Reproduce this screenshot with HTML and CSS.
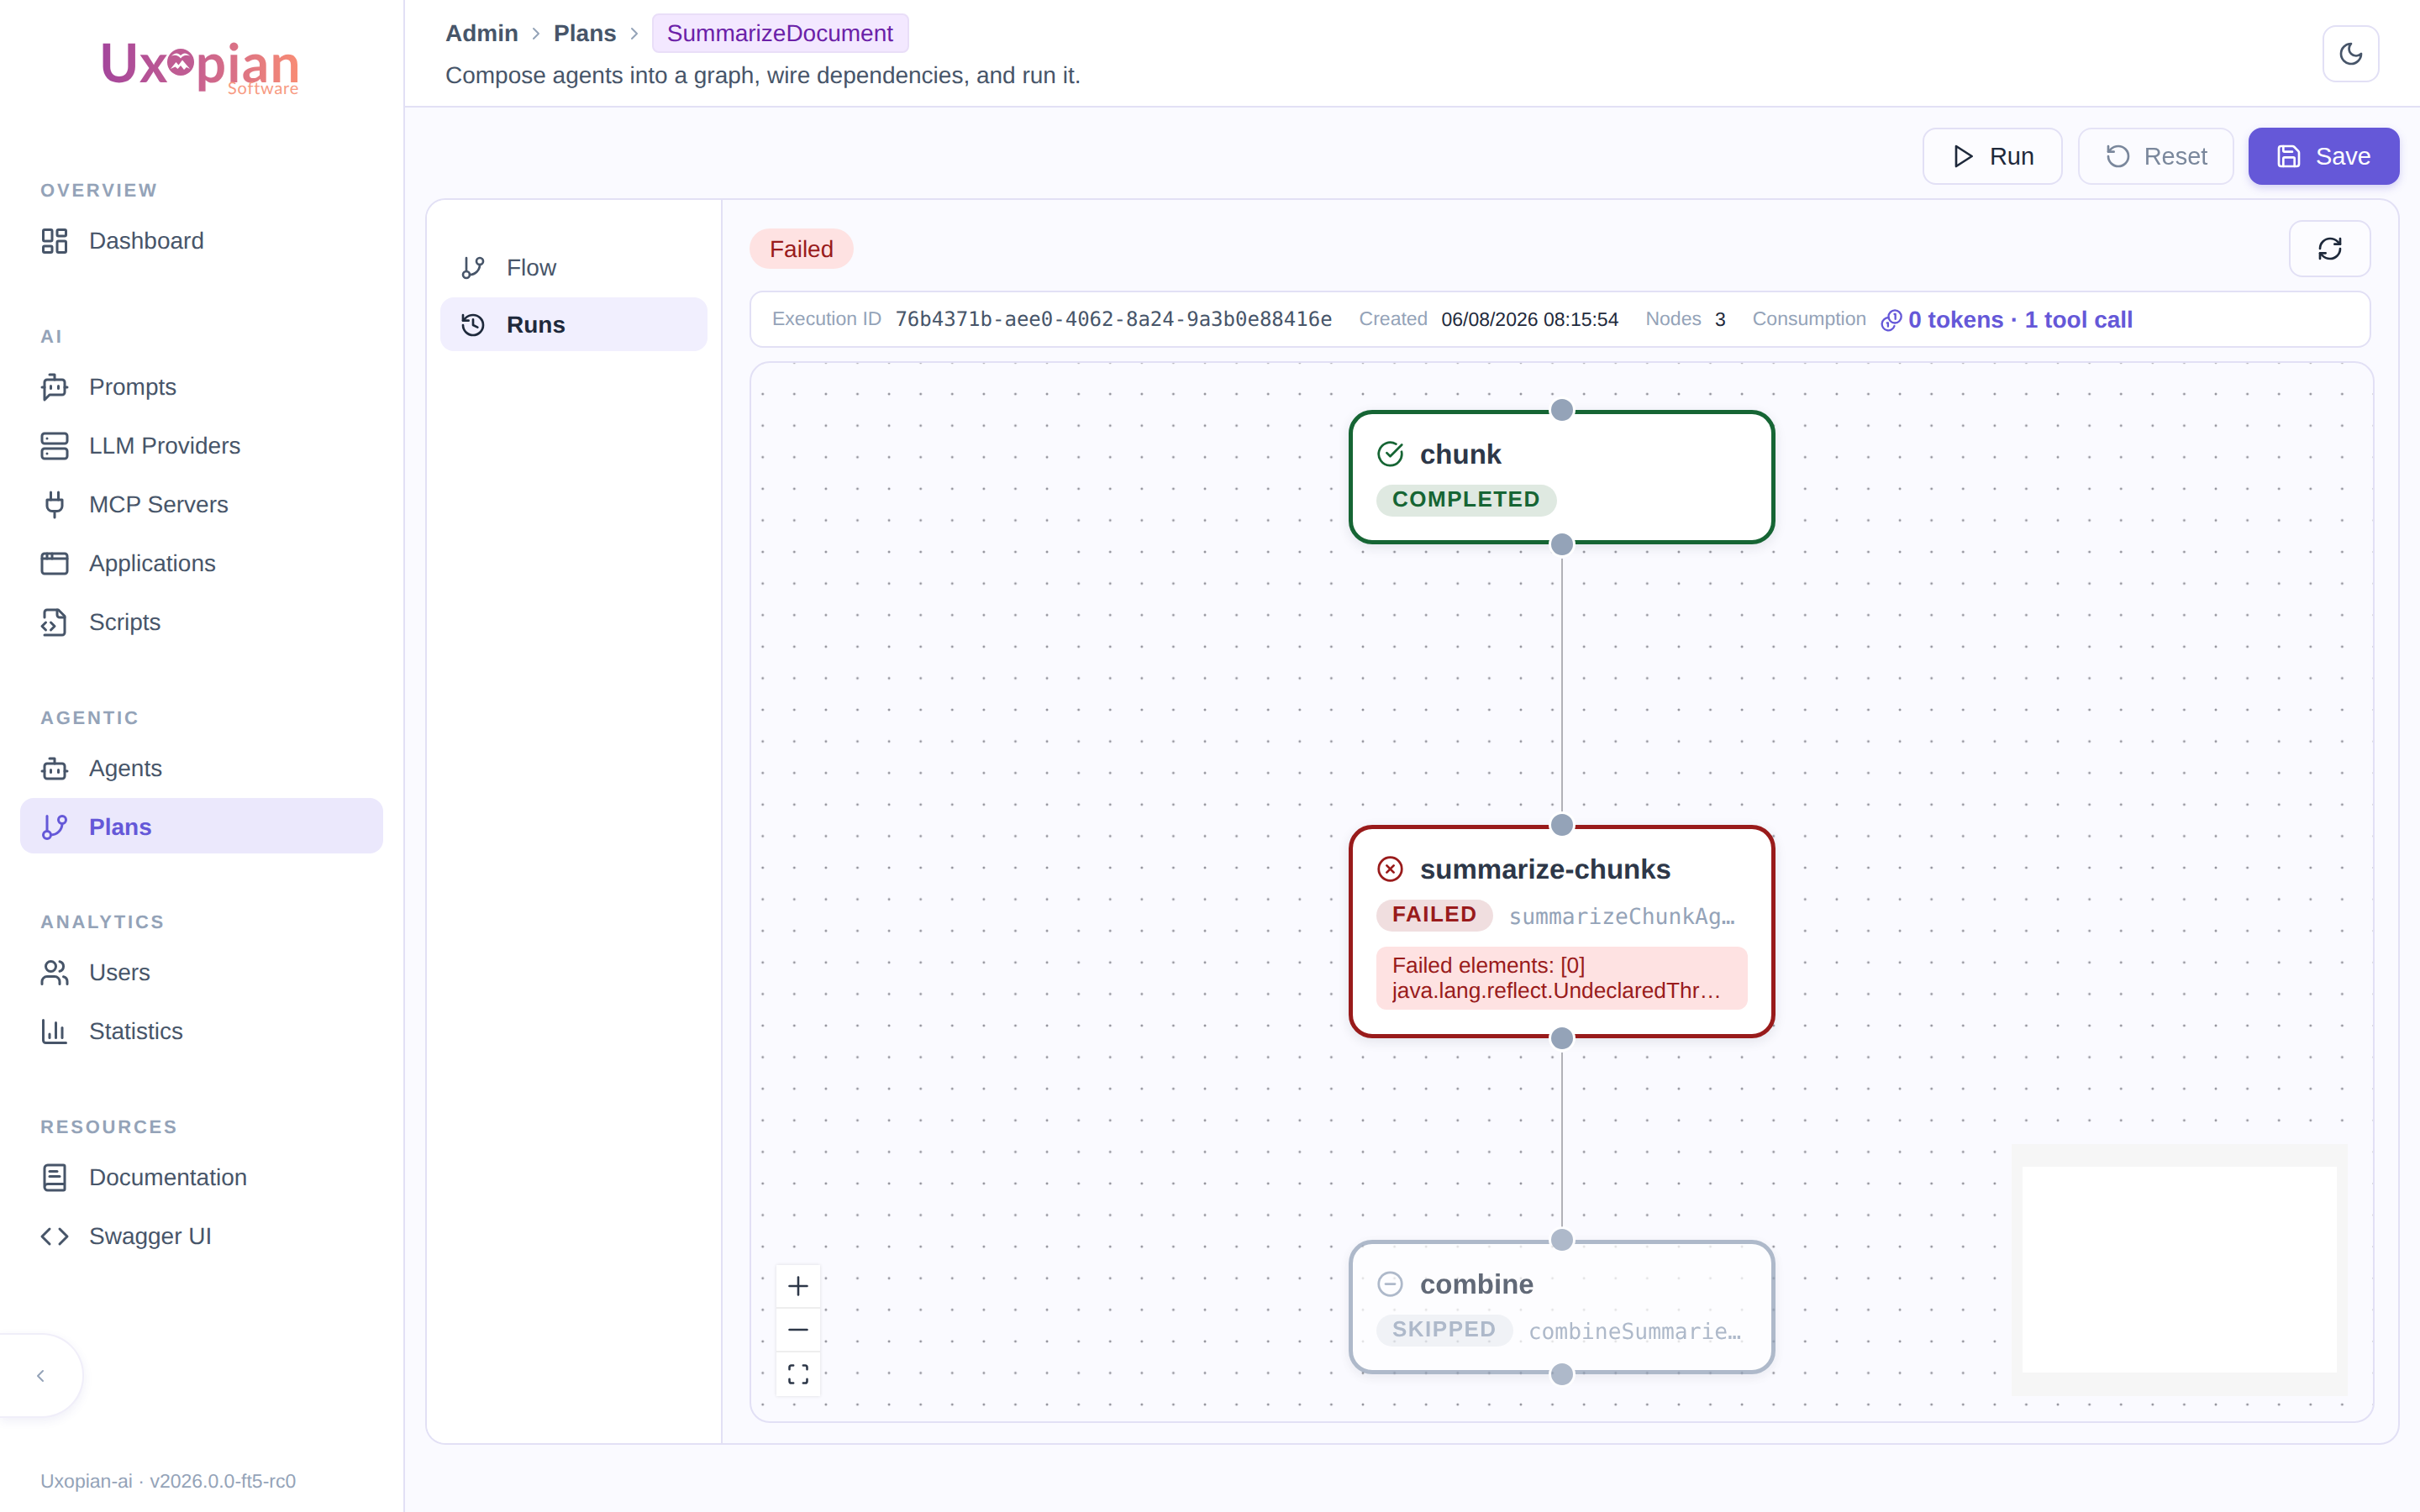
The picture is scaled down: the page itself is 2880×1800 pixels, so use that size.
FILE: index.html
```html
<!DOCTYPE html>
<html lang="en">
<head>
<meta charset="utf-8">
<title>SummarizeDocument</title>
<link rel="stylesheet" href="styles.css">
</head>
<body>
<svg class="defs" aria-hidden="true">
  <symbol id="i-dashboard" viewBox="0 0 24 24"><rect width="7" height="9" x="3" y="3" rx="1"/><rect width="7" height="5" x="14" y="3" rx="1"/><rect width="7" height="9" x="14" y="12" rx="1"/><rect width="7" height="5" x="3" y="16" rx="1"/></symbol>
  <symbol id="i-prompts" viewBox="0 0 24 24"><path d="M12 6V2H8"/><path d="m8 18-4 4V8a2 2 0 0 1 2-2h12a2 2 0 0 1 2 2v8a2 2 0 0 1-2 2Z"/><path d="M2 12h2"/><path d="M9 11v2"/><path d="M15 11v2"/><path d="M20 12h2"/></symbol>
  <symbol id="i-server" viewBox="0 0 24 24"><rect width="20" height="8" x="2" y="2" rx="2"/><rect width="20" height="8" x="2" y="14" rx="2"/><path d="M6 6h.01"/><path d="M6 18h.01"/></symbol>
  <symbol id="i-plug" viewBox="0 0 24 24"><path d="M12 22v-5"/><path d="M9 8V2"/><path d="M15 8V2"/><path d="M18 8v5a4 4 0 0 1-4 4h-4a4 4 0 0 1-4-4V8Z"/></symbol>
  <symbol id="i-app" viewBox="0 0 24 24"><rect x="2" y="4" width="20" height="16" rx="2"/><path d="M10 4v4"/><path d="M2 8h20"/><path d="M6 4v4"/></symbol>
  <symbol id="i-script" viewBox="0 0 24 24"><path d="M4 22h14a2 2 0 0 0 2-2V7l-5-5H6a2 2 0 0 0-2 2v4"/><path d="M14 2v4a2 2 0 0 0 2 2h4"/><path d="m5 12-3 3 3 3"/><path d="m9 18 3-3-3-3"/></symbol>
  <symbol id="i-bot" viewBox="0 0 24 24"><path d="M12 8V4H8"/><rect width="16" height="12" x="4" y="8" rx="2"/><path d="M2 14h2"/><path d="M20 14h2"/><path d="M15 13v2"/><path d="M9 13v2"/></symbol>
  <symbol id="i-branch" viewBox="0 0 24 24"><path d="M6 3v12"/><circle cx="18" cy="6" r="3"/><circle cx="6" cy="18" r="3"/><path d="M18 9a9 9 0 0 1-9 9"/></symbol>
  <symbol id="i-users" viewBox="0 0 24 24"><path d="M16 21v-2a4 4 0 0 0-4-4H6a4 4 0 0 0-4 4v2"/><circle cx="9" cy="7" r="4"/><path d="M22 21v-2a4 4 0 0 0-3-3.87"/><path d="M16 3.13a4 4 0 0 1 0 7.75"/></symbol>
  <symbol id="i-chart" viewBox="0 0 24 24"><path d="M3 3v16a2 2 0 0 0 2 2h16"/><path d="M18 17V9"/><path d="M13 17V5"/><path d="M8 17v-3"/></symbol>
  <symbol id="i-book" viewBox="0 0 24 24"><path d="M4 19.5v-15A2.5 2.5 0 0 1 6.5 2H19a1 1 0 0 1 1 1v18a1 1 0 0 1-1 1H6.5a1 1 0 0 1 0-5H20"/><path d="M8 11h8"/><path d="M8 7h6"/></symbol>
  <symbol id="i-code" viewBox="0 0 24 24"><path d="m16 18 6-6-6-6"/><path d="m8 6-6 6 6 6"/></symbol>
  <symbol id="i-left" viewBox="0 0 24 24"><path d="m15 18-6-6 6-6"/></symbol>
  <symbol id="i-right" viewBox="0 0 24 24"><path d="m9 18 6-6-6-6"/></symbol>
  <symbol id="i-moon" viewBox="0 0 24 24"><path d="M12 3a6 6 0 0 0 9 9 9 9 0 1 1-9-9Z"/></symbol>
  <symbol id="i-play" viewBox="0 0 24 24"><path d="M6 3 20 12 6 21Z"/></symbol>
  <symbol id="i-reset" viewBox="0 0 24 24"><path d="M3 12a9 9 0 1 0 9-9 9.75 9.75 0 0 0-6.74 2.74L3 8"/><path d="M3 3v5h5"/></symbol>
  <symbol id="i-save" viewBox="0 0 24 24"><path d="M15.2 3a2 2 0 0 1 1.4.6l3.8 3.8a2 2 0 0 1 .6 1.4V19a2 2 0 0 1-2 2H5a2 2 0 0 1-2-2V5a2 2 0 0 1 2-2z"/><path d="M17 21v-7a1 1 0 0 0-1-1H8a1 1 0 0 0-1 1v7"/><path d="M7 3v4a1 1 0 0 0 1 1h7"/></symbol>
  <symbol id="i-history" viewBox="0 0 24 24"><path d="M3 12a9 9 0 1 0 9-9 9.75 9.75 0 0 0-6.74 2.74L3 8"/><path d="M3 3v5h5"/><path d="M12 7v5l4 2"/></symbol>
  <symbol id="i-refresh" viewBox="0 0 24 24"><path d="M3 12a9 9 0 0 1 9-9 9.75 9.75 0 0 1 6.74 2.74L21 8"/><path d="M21 3v5h-5"/><path d="M21 12a9 9 0 0 1-9 9 9.75 9.75 0 0 1-6.74-2.74L3 16"/><path d="M8 16H3v5"/></symbol>
  <symbol id="i-coins" viewBox="0 0 24 24"><circle cx="15.5" cy="8.5" r="6.5"/><path d="M15 6h1v5"/><path d="M9 9.6a6.5 6.5 0 1 0 6 8.4"/><path d="M7.5 15h1v3.5"/></symbol>
  <symbol id="i-check" viewBox="0 0 24 24"><path d="M21.801 10A10 10 0 1 1 17 3.335"/><path d="m9 11 3 3L22 4"/></symbol>
  <symbol id="i-x" viewBox="0 0 24 24"><circle cx="12" cy="12" r="10"/><path d="m15 9-6 6"/><path d="m9 9 6 6"/></symbol>
  <symbol id="i-minus" viewBox="0 0 24 24"><circle cx="12" cy="12" r="10"/><path d="M8 12h8"/></symbol>
  <symbol id="i-fit" viewBox="0 0 24 24"><path d="M3 7V5a2 2 0 0 1 2-2h2"/><path d="M17 3h2a2 2 0 0 1 2 2v2"/><path d="M21 17v2a2 2 0 0 1-2 2h-2"/><path d="M7 21H5a2 2 0 0 1-2-2v-2"/></symbol>
  <symbol id="i-plus2" viewBox="0 0 24 24"><path d="M12 3v18"/><path d="M3 12h18"/></symbol>
  <symbol id="i-minus2" viewBox="0 0 24 24"><path d="M3 12h18"/></symbol>
</svg>

<aside class="sidebar">
  <div class="logo">
    <div class="logo-word"><span>Ux</span><svg class="logo-mark" viewBox="0 0 32 32"><circle cx="16" cy="16" r="16" fill="#bf5c93"/><path d="M5 8.500C10 4 13 5 16 8c3-3 6-4 11 .5C22 7 19 8 16 11.500 13 8 10 7 5 8.500Z" fill="#fff"/><path d="M4 24 10.500 16l3 3.500L18 13.500 27 24l-4-2-3 3-4-5-3.500 4-3-2.500Z" fill="#fff"/></svg><span>pian</span></div>
    <div class="logo-sub">Software</div>
  </div>
  <section class="nav-group">
    <h3>OVERVIEW</h3>
    <a class="nav-item"><svg class="icon"><use href="#i-dashboard"/></svg>Dashboard</a>
  </section>
  <section class="nav-group">
    <h3>AI</h3>
    <a class="nav-item"><svg class="icon"><use href="#i-prompts"/></svg>Prompts</a>
    <a class="nav-item"><svg class="icon"><use href="#i-server"/></svg>LLM Providers</a>
    <a class="nav-item"><svg class="icon"><use href="#i-plug"/></svg>MCP Servers</a>
    <a class="nav-item"><svg class="icon"><use href="#i-app"/></svg>Applications</a>
    <a class="nav-item"><svg class="icon"><use href="#i-script"/></svg>Scripts</a>
  </section>
  <section class="nav-group">
    <h3>AGENTIC</h3>
    <a class="nav-item"><svg class="icon"><use href="#i-bot"/></svg>Agents</a>
    <a class="nav-item active"><svg class="icon"><use href="#i-branch"/></svg>Plans</a>
  </section>
  <section class="nav-group">
    <h3>ANALYTICS</h3>
    <a class="nav-item"><svg class="icon"><use href="#i-users"/></svg>Users</a>
    <a class="nav-item"><svg class="icon"><use href="#i-chart"/></svg>Statistics</a>
  </section>
  <section class="nav-group">
    <h3>RESOURCES</h3>
    <a class="nav-item"><svg class="icon"><use href="#i-book"/></svg>Documentation</a>
    <a class="nav-item"><svg class="icon"><use href="#i-code"/></svg>Swagger UI</a>
  </section>
  <button class="collapse"><svg class="icon-sm"><use href="#i-left"/></svg></button>
  <div class="side-footer">Uxopian-ai · v2026.0.0-ft5-rc0</div>
</aside>

<div class="main">
  <header class="topbar">
    <div class="top-left">
      <div class="crumbs">
        <span class="crumb">Admin</span><svg class="icon-sm crumb-sep"><use href="#i-right"/></svg>
        <span class="crumb">Plans</span><svg class="icon-sm crumb-sep"><use href="#i-right"/></svg>
        <span class="crumb-tag">SummarizeDocument</span>
      </div>
      <p class="subtitle">Compose agents into a graph, wire dependencies, and run it.</p>
    </div>
    <button class="moon"><svg class="icon-btn"><use href="#i-moon"/></svg></button>
  </header>

  <div class="content">
    <div class="toolbar">
      <button class="btn btn-run"><svg class="icon-btn"><use href="#i-play"/></svg>Run</button>
      <button class="btn btn-reset"><svg class="icon-btn"><use href="#i-reset"/></svg>Reset</button>
      <button class="btn btn-save"><svg class="icon-btn"><use href="#i-save"/></svg>Save</button>
    </div>

    <div class="panel">
      <nav class="panel-nav">
        <a class="tab"><svg class="icon-btn"><use href="#i-branch"/></svg>Flow</a>
        <a class="tab active"><svg class="icon-btn"><use href="#i-history"/></svg>Runs</a>
      </nav>
      <div class="panel-body">
        <div class="run-head">
          <span class="status">Failed</span>
          <button class="refresh"><svg class="icon-btn"><use href="#i-refresh"/></svg></button>
        </div>
        <div class="info">
          <span class="info-pair"><span class="label">Execution ID</span><span class="mono">76b4371b-aee0-4062-8a24-9a3b0e88416e</span></span>
          <span class="info-pair"><span class="label">Created</span><span class="val">06/08/2026 08:15:54</span></span>
          <span class="info-pair"><span class="label">Nodes</span><span class="val">3</span></span>
          <span class="info-pair"><span class="label">Consumption</span><span class="tokens"><svg class="icon-coin"><use href="#i-coins"/></svg>0 tokens · 1 tool call</span></span>
        </div>
        <div class="canvas">
          <div class="edge edge-a"></div>
          <div class="edge edge-b"></div>

          <div class="node node-ok">
            <span class="handle handle-top"></span>
            <div class="node-title"><svg class="icon-node"><use href="#i-check"/></svg>chunk</div>
            <div class="node-meta"><span class="pill">COMPLETED</span></div>
            <span class="handle handle-bottom"></span>
          </div>

          <div class="node node-fail">
            <span class="handle handle-top"></span>
            <div class="node-title"><svg class="icon-node"><use href="#i-x"/></svg>summarize-chunks</div>
            <div class="node-meta"><span class="pill">FAILED</span><span class="agent">summarizeChunkAgent</span></div>
            <div class="error"><span class="error-line">Failed elements: [0]</span><span class="error-line">java.lang.reflect.UndeclaredThrowableException</span></div>
            <span class="handle handle-bottom"></span>
          </div>

          <div class="node node-skip">
            <span class="handle handle-top"></span>
            <div class="node-title"><svg class="icon-node"><use href="#i-minus"/></svg>combine</div>
            <div class="node-meta"><span class="pill">SKIPPED</span><span class="agent">combineSummariesAgent</span></div>
            <span class="handle handle-bottom"></span>
          </div>

          <div class="zoom-ctl">
            <button><svg class="icon-zoom"><use href="#i-plus2"/></svg></button>
            <button><svg class="icon-zoom"><use href="#i-minus2"/></svg></button>
            <button><svg class="icon-zoom"><use href="#i-fit"/></svg></button>
          </div>
          <div class="minimap"><div class="minimap-view"></div></div>
        </div>
      </div>
    </div>
  </div>
</div>
</body>
</html>
```
FILE: styles.css
```css
* { box-sizing: border-box; }
html, body { margin: 0; padding: 0; }
body {
  width: 2880px;
  height: 1800px;
  display: flex;
  overflow: hidden;
  background: #fafaff;
  font-family: "Liberation Sans", Arial, sans-serif;
  font-size: 28px;
  color: #1e293b;
  text-rendering: geometricPrecision;
}
.defs { position: absolute; width: 0; height: 0; overflow: hidden; }
svg { display: block; flex: none; fill: none; stroke: currentColor; stroke-width: 2; stroke-linecap: round; stroke-linejoin: round; }
symbol { overflow: visible; }
button { font-family: inherit; cursor: pointer; }
h3, p { margin: 0; }

.icon { width: 36px; height: 36px; }
.icon-sm { width: 24px; height: 24px; }
.icon-btn { width: 32px; height: 32px; }
.icon-coin { width: 28px; height: 28px; }
.icon-node { width: 33px; height: 33px; stroke-width: 2; }
.icon-zoom { width: 28px; height: 28px; stroke-width: 2.2; }

/* sidebar */
.sidebar {
  width: 482px;
  flex: none;
  height: 1800px;
  display: flex;
  flex-direction: column;
  background: #fff;
  border-right: 2px solid #e2e0f5;
}
.logo {
  height: 206.500px;
  padding: 34px 0 0 118px;
  display: flex;
  flex-direction: column;
  align-items: flex-start;
}
.logo-word {
  display: flex;
  align-items: baseline;
  font-family: Lato, sans-serif;
  font-weight: 700;
  font-size: 64px;
  line-height: 80px;
  letter-spacing: 1.200px;
  background: linear-gradient(90deg, #a3459c 0%, #c9628f 50%, #f98d74 100%);
  -webkit-background-clip: text;
  background-clip: text;
  color: transparent;
  width: 240px;
}
.logo-mark { width: 32px; height: 32px; stroke: none; margin: 0 2px 0 -2px; align-self: center; }
.logo-sub {
  margin: -21px 0 0 153px;
  font-family: Lato, sans-serif;
  font-size: 20px;
  line-height: 24px;
  letter-spacing: .75px;
  color: #f79a82;
}
.nav-group { display: flex; flex-direction: column; padding: 0 24px; margin-bottom: 61.800px; gap: 4px; }
.nav-group h3 {
  height: 36px;
  line-height: 36px;
  margin: 2.500px 0 3.500px 24px;
  font-size: 22px;
  font-weight: 700;
  letter-spacing: 2.800px;
  color: #94a3b8;
}
.nav-item {
  height: 66px;
  display: flex;
  align-items: center;
  gap: 23px;
  padding: 3px 0 0 23px;
  border-radius: 16px;
  font-size: 28px;
  color: #475569;
}
.nav-item.active { background: #ebe8fc; color: #6558d8; font-weight: 700; }
.collapse {
  width: 100px;
  height: 101px;
  margin-top: auto;
  padding: 0 0 0 36px;
  display: flex;
  align-items: center;
  background: #fff;
  border: 2px solid #f0eef9;
  border-left: 0;
  border-radius: 0 50px 50px 0;
  box-shadow: 0 4px 12px rgba(70, 60, 160, .08);
  color: #94a3b8;
}
.side-footer {
  margin: 60px 0 22px 48px;
  height: 30px;
  line-height: 30px;
  font-size: 23px;
  color: #94a3b8;
}

/* main */
.main { flex: 1; min-width: 0; display: flex; flex-direction: column; height: 1800px; }
.topbar {
  height: 128px;
  flex: none;
  display: flex;
  justify-content: space-between;
  align-items: center;
  padding: 0 48px;
  background: #fff;
  border-bottom: 2px solid #e2e0f5;
}
.top-left { align-self: flex-start; padding-top: 16px; }
.crumbs { display: flex; align-items: center; height: 47px; gap: 9px; }
.crumb { font-weight: 700; color: #475569; }
.crumb-sep { color: #94a3b8; }
.crumb-tag {
  height: 47px;
  line-height: 43px;
  padding: 0 17px 0 16px;
  background: #f3e8ff;
  border: 2px solid #e9def8;
  border-radius: 8px;
  color: #6b21a8;
}
.subtitle { margin-top: 9px; line-height: 36px; color: #475569; }
.moon {
  width: 68px;
  height: 68px;
  margin-top: 2px;
  padding: 0;
  display: flex;
  align-items: center;
  justify-content: center;
  background: #fff;
  border: 2px solid #e2e0f5;
  border-radius: 16px;
  color: #475569;
}

.content { flex: 1; min-height: 0; display: flex; flex-direction: column; padding: 24px 24px 80px 24px; gap: 16px; }
.toolbar { display: flex; justify-content: flex-end; gap: 18px; height: 68px; flex: none; }
.btn {
  height: 68px;
  display: flex;
  align-items: center;
  gap: 16px;
  padding: 0 32px 0 30px;
  font-size: 29px;
  border: 2px solid #e2e0f5;
  border-radius: 16px;
  background: #fcfcff;
  color: #1e293b;
}
.btn-reset { color: #64748b; opacity: .85; gap: 14.500px; padding-right: 29.500px; margin-right: -1px; }
.btn-save { background: #6558d8; border-color: #6558d8; color: #fff; box-shadow: 0 4px 10px rgba(101, 88, 216, .25); }

.panel {
  flex: 1;
  min-height: 0;
  display: flex;
  border: 2px solid #e2e0f5;
  border-radius: 24px;
  overflow: hidden;
}
.panel-nav {
  width: 352px;
  flex: none;
  padding: 48px 16px 0 16px;
  display: flex;
  flex-direction: column;
  gap: 4px;
  background: #fff;
  border-right: 2px solid #e2e0f5;
}
.tab {
  height: 64px;
  display: flex;
  align-items: center;
  gap: 24px;
  padding: 2px 0 0 23px;
  border-radius: 16px;
  color: #475569;
}
.tab.active { background: #f1effe; color: #1e293b; font-weight: 700; }

.panel-body {
  flex: 1;
  min-width: 0;
  display: flex;
  flex-direction: column;
  gap: 16px;
  padding: 24px 32px 24px 32px;
}
.run-head { display: flex; justify-content: space-between; align-items: center; height: 68px; flex: none; }
.status {
  height: 48px;
  line-height: 49px;
  padding: 0 24px;
  border-radius: 24px;
  background: #fee2e2;
  color: #991b1b;
}
.refresh {
  width: 98px;
  height: 68px;
  padding: 0;
  display: flex;
  align-items: center;
  justify-content: center;
  background: #fcfcff;
  border: 2px solid #e2e0f5;
  border-radius: 16px;
  color: #1e293b;
}
.info {
  height: 68px;
  flex: none;
  display: flex;
  align-items: center;
  gap: 32px;
  padding: 0 25px;
  background: #fff;
  border: 2px solid #e2e0f5;
  border-radius: 16px;
}
.info-pair { display: flex; align-items: center; gap: 16px; }
.label { font-size: 23px; color: #94a3b8; margin-bottom: 2px; }
.val { font-size: 23px; color: #1e293b; }
.mono { font-family: "DejaVu Sans Mono", monospace; font-size: 24px; color: #475569; }
.tokens { display: flex; align-items: center; gap: 6px; margin-top: 2px; font-weight: 700; color: #6558d8; }

/* flow canvas */
.canvas {
  position: relative;
  flex: 1;
  min-height: 0;
  margin-right: -4px;
  border: 2px solid #e2e0f5;
  border-radius: 24px;
  overflow: hidden;
  background-color: #fafaff;
  background-image: radial-gradient(circle, #91919a .8px, transparent 1.900px);
  background-size: 37.600px 37.600px;
  background-position: -5.100px 18.300px;
}
.edge { position: absolute; left: 964px; width: 2px; background: #b1b1b7; }
.edge-a { top: 233px; height: 302px; }
.edge-b { top: 821px; height: 208px; }

.node {
  position: absolute;
  left: 711px;
  width: 508px;
  display: flex;
  flex-direction: column;
  gap: 18px;
  padding: 28px;
  background: #fff;
  border: 5px solid;
  border-radius: 28px;
  box-shadow: 0 4px 14px rgba(30, 41, 59, .1);
}
.node-ok { top: 56px; height: 160px; border-color: #166534; }
.node-fail { top: 550px; height: 254px; border-color: #991b1b; }
.node-skip { top: 1044px; height: 160px; border-color: #94a3b8; opacity: .74; }
.node-title {
  display: flex;
  align-items: center;
  gap: 19px;
  height: 38px;
  padding-top: 1px;
  font-size: 33px;
  font-weight: 700;
  color: #2d3748;
  white-space: nowrap;
}
.node-ok .icon-node { color: #166534; }
.node-fail .icon-node { color: #991b1b; }
.node-skip .icon-node { color: #94a3b8; }
.node-meta { display: flex; align-items: center; gap: 18px; height: 38px; }
.pill {
  flex: none;
  height: 38px;
  line-height: 34px;
  padding: 0 19px;
  border-radius: 19px;
  font-size: 26px;
  font-weight: 700;
  letter-spacing: 1.500px;
}
.node-ok .pill { background: #dfe9e1; color: #166534; }
.node-fail .pill { background: #f0dedf; color: #991b1b; }
.node-skip .pill { background: #edf0f4; color: #94a3b8; }
.agent {
  flex: 1;
  min-width: 0;
  font-family: "DejaVu Sans Mono", monospace;
  font-size: 26.300px;
  line-height: 38px;
  padding-top: 3px;
  color: #94a3b8;
  white-space: nowrap;
  overflow: hidden;
  text-overflow: ellipsis;
}
.error {
  height: 75px;
  padding: 8px 19px;
  border-radius: 12px;
  background: #fee2e2;
  color: #991b1b;
  font-size: 26.300px;
  line-height: 29.500px;
}
.error-line { display: block; white-space: nowrap; overflow: hidden; text-overflow: ellipsis; }
.handle {
  position: absolute;
  left: 50%;
  width: 32px;
  height: 32px;
  margin-left: -16px;
  border: 3.500px solid #fff;
  border-radius: 50%;
  background: #94a3b8;
}
.handle-top { top: -21px; }
.handle-bottom { bottom: -21px; }

.zoom-ctl {
  position: absolute;
  left: 30px;
  bottom: 30px;
  width: 52px;
  display: flex;
  flex-direction: column;
  box-shadow: 0 0 4px rgba(0, 0, 0, .12);
}
.zoom-ctl button {
  width: 52px;
  height: 52px;
  padding: 0;
  display: flex;
  align-items: center;
  justify-content: center;
  background: #fff;
  border: 0;
  border-bottom: 2px solid #eee;
  color: #2d3748;
}
.zoom-ctl button:last-child { border-bottom: 0; }
.minimap {
  position: absolute;
  right: 30px;
  bottom: 30px;
  width: 400px;
  height: 300px;
  padding: 27px 13px 28px 12.500px;
  background: #f6f6f6;
}
.minimap-view { width: 100%; height: 100%; background: #fff; }
```
